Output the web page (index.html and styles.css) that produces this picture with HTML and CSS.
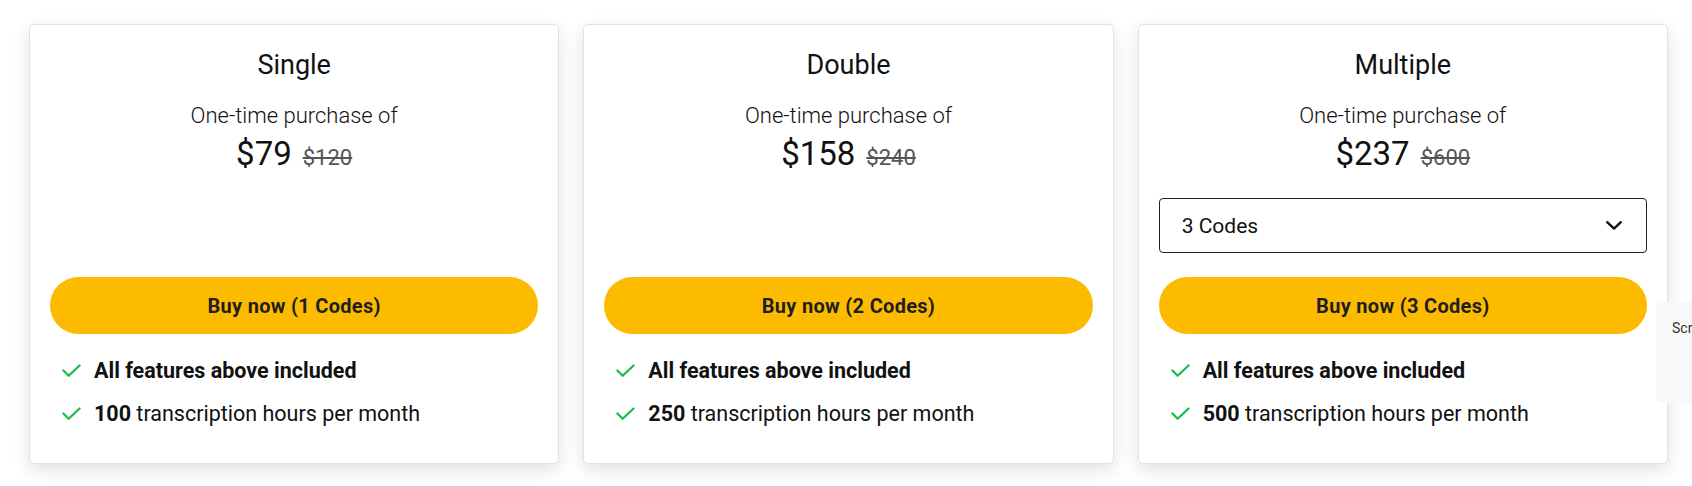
FILE: index.html
```html
<!DOCTYPE html>
<html lang="en">
<head>
<meta charset="utf-8">
<title>Pricing</title>
<link rel="stylesheet" href="styles.css">
</head>
<body>
<main class="plans">
  <section class="card">
    <h2 class="title">Single</h2>
    <p class="sub">One-time purchase of</p>
    <div class="price"><span class="now">$79</span><s class="was">$120</s></div>
    <div class="spacer"></div>
    <button class="buy">Buy now (1 Codes)</button>
    <ul class="features">
      <li><svg class="check" viewBox="0 0 20 14"><path d="M1.5 6.5 L7 12 L18.5 1.2"/></svg><b>All features above included</b></li>
      <li><svg class="check" viewBox="0 0 20 14"><path d="M1.5 6.5 L7 12 L18.5 1.2"/></svg><span><b>100</b> transcription hours per month</span></li>
    </ul>
  </section>
  <section class="card">
    <h2 class="title">Double</h2>
    <p class="sub">One-time purchase of</p>
    <div class="price"><span class="now">$158</span><s class="was">$240</s></div>
    <div class="spacer"></div>
    <button class="buy">Buy now (2 Codes)</button>
    <ul class="features">
      <li><svg class="check" viewBox="0 0 20 14"><path d="M1.5 6.5 L7 12 L18.5 1.2"/></svg><b>All features above included</b></li>
      <li><svg class="check" viewBox="0 0 20 14"><path d="M1.5 6.5 L7 12 L18.5 1.2"/></svg><span><b>250</b> transcription hours per month</span></li>
    </ul>
  </section>
  <section class="card">
    <h2 class="title">Multiple</h2>
    <p class="sub">One-time purchase of</p>
    <div class="price"><span class="now">$237</span><s class="was">$600</s></div>
    <div class="select"><span>3 Codes</span><svg class="chev" viewBox="0 0 16 9"><path d="M1.2 1.2 L8 7.6 L14.8 1.2"/></svg></div>
    <button class="buy">Buy now (3 Codes)</button>
    <ul class="features">
      <li><svg class="check" viewBox="0 0 20 14"><path d="M1.5 6.5 L7 12 L18.5 1.2"/></svg><b>All features above included</b></li>
      <li><svg class="check" viewBox="0 0 20 14"><path d="M1.5 6.5 L7 12 L18.5 1.2"/></svg><span><b>500</b> transcription hours per month</span></li>
    </ul>
  </section>
</main>
<aside class="float">Scroll</aside>
</body>
</html>
```
FILE: styles.css
```css
html {
  overflow: hidden;
  background: #ffffff;
}
body {
  margin: 0;
  padding: 0;
  min-height: 486px;
  font-family: Roboto, "Liberation Sans", sans-serif;
  color: #111;
}
.plans {
  display: grid;
  grid-template-columns: repeat(3, 1fr);
  gap: 24px;
  padding: 24px 24px 0 29px;
}
.card {
  background: #fff;
  border: 1px solid #e2e2e2;
  border-radius: 5px;
  box-shadow: 0 6px 18px rgba(0, 0, 0, 0.12);
  padding: 24px 20px 28px;
  display: flex;
  flex-direction: column;
  align-items: stretch;
  text-align: center;
}
.title {
  margin: 0;
  font-size: 27px;
  line-height: 32px;
  font-weight: 400;
  color: #111;
}
.sub {
  margin: 21px 0 0;
  font-size: 22px;
  line-height: 28px;
  font-weight: 300;
  color: #111;
}
.price {
  margin-top: 5px;
  display: flex;
  justify-content: center;
  align-items: baseline;
  gap: 11px;
  line-height: 38px;
}
.now {
  font-size: 33px;
  font-weight: 400;
  color: #111;
}
.was {
  font-size: 22px;
  color: #555;
  font-weight: 400;
}
.spacer {
  height: 55px;
  margin-top: 21px;
}
.select {
  height: 55px;
  margin-top: 21px;
  box-sizing: border-box;
  border: 1px solid #222;
  border-radius: 4px;
  display: flex;
  align-items: center;
  justify-content: space-between;
  padding: 0 24px 0 22px;
  font-size: 21px;
  font-weight: 400;
  color: #111;
  text-align: left;
}
.chev {
  width: 16px;
  height: 9px;
  fill: none;
  stroke: #111;
  stroke-width: 2.4;
  stroke-linecap: round;
  stroke-linejoin: round;
}
.buy {
  margin-top: 24px;
  height: 57px;
  border: 0;
  border-radius: 29px;
  background: #fdbb00;
  color: #1e1e1e;
  font-family: Roboto, "Liberation Sans", sans-serif;
  font-size: 20px;
  font-weight: 700;
  letter-spacing: 0.3px;
  cursor: pointer;
}
.features {
  list-style: none;
  margin: 15px 0 0;
  padding: 0 0 0 12px;
  text-align: left;
}
.features li {
  display: flex;
  align-items: center;
  gap: 13px;
  height: 43px;
  font-size: 21.5px;
  color: #111;
}
.features b {
  font-weight: 700;
}
.check {
  width: 19px;
  height: 14px;
  flex: none;
  fill: none;
  stroke: #16be4d;
  stroke-width: 2.4;
  stroke-linecap: round;
  stroke-linejoin: round;
}
.float {
  position: fixed;
  left: 1656px;
  top: 302px;
  width: 120px;
  height: 101px;
  box-sizing: border-box;
  background: #f8f8f8;
  border-radius: 6px;
  padding: 18px 0 0 16px;
  font-size: 14px;
  color: #333;
}
```
